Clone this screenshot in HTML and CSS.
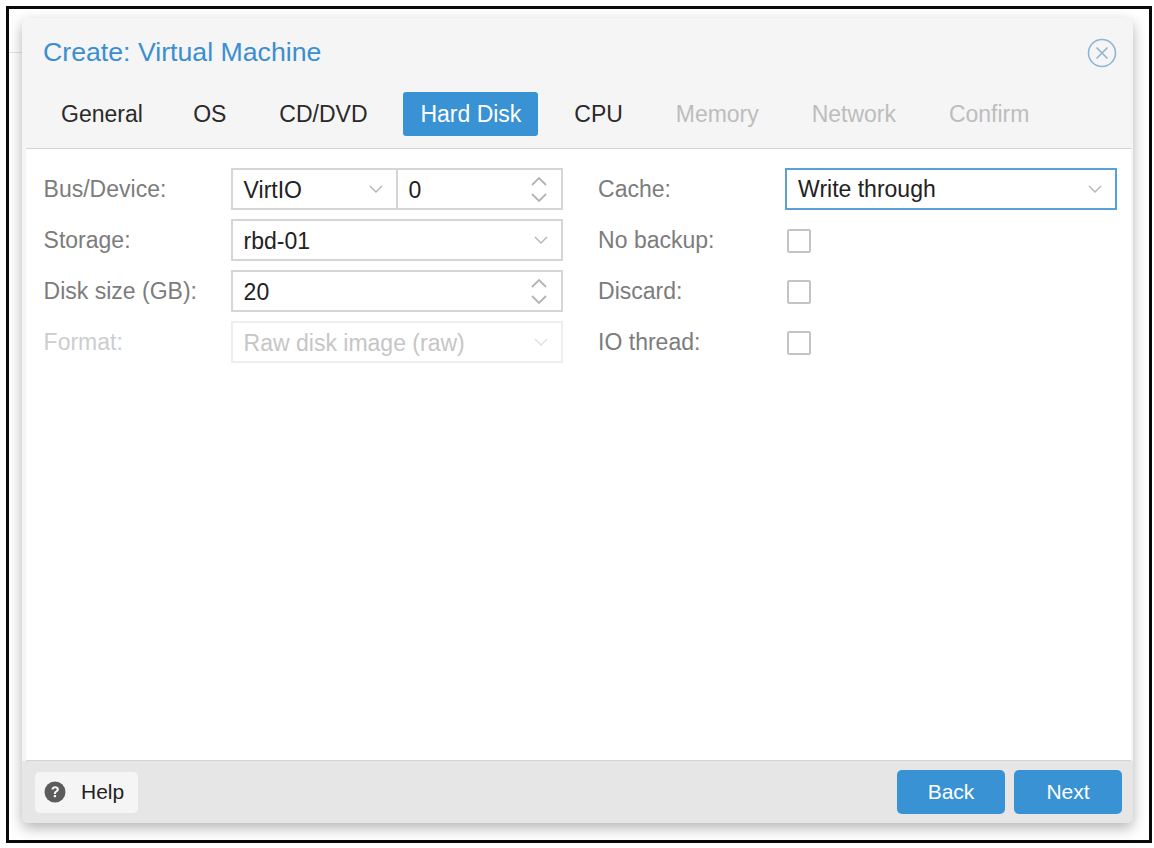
FILE: index.html
```html
<!DOCTYPE html>
<html lang="en">
<head>
    <meta charset="UTF-8">
    <title>Create: Virtual Machine</title>
    <link rel="stylesheet" href="styles.css">
</head>
<body>

<div class="frame">
    <div class="dialog">
        <div class="head">
            <div class="title-row">
                <h1>Create: Virtual Machine</h1>
                <svg class="close" viewBox="0 0 30 30">
                    <circle cx="15" cy="15" r="13.5"/>
                    <path d="M9.5 9.5 20.5 20.5M20.5 9.5 9.5 20.5"/>
                </svg>
            </div>
            <div class="tabs">
                <span class="tab">General</span>
                <span class="tab">OS</span>
                <span class="tab">CD/DVD</span>
                <span class="tab active">Hard Disk</span>
                <span class="tab">CPU</span>
                <span class="tab off">Memory</span>
                <span class="tab off">Network</span>
                <span class="tab off">Confirm</span>
            </div>
        </div>

        <div class="content">
            <div class="col">
                <div class="row">
                    <label>Bus/Device:</label>
                    <div class="pair">
                        <div class="field">
                            <span>VirtIO</span>
                            <svg class="chev" viewBox="0 0 14 8"><path d="M1 1 7 7 13 1"/></svg>
                        </div>
                        <div class="field joined">
                            <span>0</span>
                            <svg class="spin" viewBox="0 0 18 25"><path d="M2 8 9 1 16 8M2 17 9 24 16 17"/></svg>
                        </div>
                    </div>
                </div>
                <div class="row">
                    <label>Storage:</label>
                    <div class="field">
                        <span>rbd-01</span>
                        <svg class="chev" viewBox="0 0 14 8"><path d="M1 1 7 7 13 1"/></svg>
                    </div>
                </div>
                <div class="row">
                    <label>Disk size (GB):</label>
                    <div class="field">
                        <span>20</span>
                        <svg class="spin" viewBox="0 0 18 25"><path d="M2 8 9 1 16 8M2 17 9 24 16 17"/></svg>
                    </div>
                </div>
                <div class="row disabled">
                    <label>Format:</label>
                    <div class="field">
                        <span>Raw disk image (raw)</span>
                        <svg class="chev" viewBox="0 0 14 8"><path d="M1 1 7 7 13 1"/></svg>
                    </div>
                </div>
            </div>

            <div class="col">
                <div class="row">
                    <label>Cache:</label>
                    <div class="field focus">
                        <span>Write through</span>
                        <svg class="chev" viewBox="0 0 14 8"><path d="M1 1 7 7 13 1"/></svg>
                    </div>
                </div>
                <div class="row">
                    <label>No backup:</label>
                    <div class="check"></div>
                </div>
                <div class="row">
                    <label>Discard:</label>
                    <div class="check"></div>
                </div>
                <div class="row">
                    <label>IO thread:</label>
                    <div class="check"></div>
                </div>
            </div>
        </div>

        <div class="foot">
            <button class="help">
                <svg class="help-icon" viewBox="0 0 22 22">
                    <circle cx="11" cy="11" r="10.5"/>
                    <path d="M7.4 8.6C7.6 6.3 9.2 5.2 11.2 5.2 13.3 5.2 14.9 6.5 14.9 8.3 14.9 9.9 13.9 10.6 12.9 11.2 12.2 11.6 12 12 12 12.9H9.8C9.8 11.3 10.3 10.5 11.4 9.9 12.2 9.4 12.6 9.1 12.6 8.4 12.6 7.7 12 7.2 11.1 7.2 10.2 7.2 9.7 7.8 9.6 8.6ZM9.8 14H12.1V16.3H9.8Z"/>
                </svg>
                Help
            </button>
            <div class="nav">
                <button class="primary">Back</button>
                <button class="primary">Next</button>
            </div>
        </div>
    </div>
</div>

</body>
</html>
```

FILE: styles.css
```css
html, body {
    height: 100%;
}
body {
    background-color: #fff;
    font-family: "Liberation Sans", Arial, sans-serif;
    font-size: 23px;
    margin: 0;
    padding: 6px 2px 5px 6px;
    box-sizing: border-box;
    overflow: hidden;
}
.frame {
    position: relative;
    height: 100%;
    box-sizing: border-box;
    border: 3px solid #0a0a0a;
    padding: 9px 16px 17px 13px;
}
/* bit of the page behind the dialog */
.frame::before {
    content: "";
    position: absolute;
    left: 0;
    top: 43px;
    width: 13px;
    height: 1px;
    background-color: #e2e2e2;
}
.dialog {
    position: relative;
    height: 100%;
    display: flex;
    flex-direction: column;
    background-color: #f5f5f5;
    border-radius: 6px;
    box-shadow: 0 5px 14px rgba(0,0,0,0.3);
    overflow: hidden;
}
.head {
    height: 130px;
    padding: 0 16px 0 21px;
    flex-shrink: 0;
}
.title-row {
    display: flex;
    justify-content: space-between;
    align-items: center;
    height: 70px;
}
h1 {
    margin: 0 0 2px;
    font-size: 26.7px;
    font-weight: normal;
    color: #3a8fd0;
}
.close {
    width: 30px;
    height: 30px;
    fill: none;
    stroke: #8db6d6;
    stroke-width: 1.6;
}
.tabs {
    display: flex;
    gap: 18.9px;
    padding-top: 4px;
    padding-left: 1px;
}
.tab {
    height: 44px;
    line-height: 44px;
    padding: 0 17px;
    color: #2a2a2a;
    border-radius: 3px;
}
.tab:nth-child(2) {
    margin-left: -2.5px;
}
.tab.active {
    background-color: #3892d4;
    color: #fff;
}
.tab.off {
    color: #bdbdbd;
}
.content {
    flex: 1;
    display: flex;
    gap: 35.6px;
    margin: 0 2px 0 4px;
    padding: 19px 14px 0 17.6px;
    background-color: #fff;
    border-top: 1px solid #d4d4d4;
    border-bottom: 1px solid #d4d4d4;
}
.col {
    flex: 1;
    display: flex;
    flex-direction: column;
    gap: 9px;
}
.row {
    display: flex;
    align-items: center;
    height: 42px;
}
.row label {
    width: 187px;
    flex-shrink: 0;
    color: #7c7c7c;
}
.pair {
    flex: 1;
    display: flex;
}
.field {
    flex: 1;
    height: 42px;
    box-sizing: border-box;
    display: flex;
    justify-content: space-between;
    align-items: center;
    padding: 0 13px 0 11px;
    border: 2px solid #d6d6d6;
    color: #222;
}
.field span {
    padding-top: 3px;
}
.field.joined {
    border-left-width: 0;
}
.field.focus {
    border-color: #5a9fd8;
}
.field.focus span {
    padding-top: 1px;
}
.chev {
    width: 14px;
    height: 8px;
    fill: none;
    stroke: #b4b4b4;
    stroke-width: 1.4;
}
.spin {
    width: 18px;
    height: 25px;
    fill: none;
    stroke: #b4b4b4;
    stroke-width: 1.8;
}
.disabled label {
    color: #cdcdcd;
}
.disabled .field {
    border-color: #eeeeee;
    color: #c6c6c6;
}
.disabled .chev {
    stroke: #e0e0e0;
}
.check {
    width: 24px;
    height: 24px;
    box-sizing: border-box;
    margin: 2px 0 0 2px;
    border: 2px solid #c4c4c4;
    border-radius: 2px;
}
.foot {
    height: 62px;
    flex-shrink: 0;
    display: flex;
    justify-content: space-between;
    align-items: center;
    padding: 0 11px 0 13px;
    background-color: #e6e6e6;
}
button {
    font-family: inherit;
    font-size: 21px;
    border: none;
    border-radius: 5px;
    cursor: pointer;
}
.help {
    width: 103px;
    height: 41px;
    display: flex;
    align-items: center;
    gap: 15px;
    padding: 0 0 0 9px;
    background-color: #f5f5f5;
    color: #222;
}
.help-icon {
    width: 22px;
    height: 22px;
    flex-shrink: 0;
}
.help-icon circle {
    fill: #5c5c5c;
}
.help-icon path {
    fill: #f5f5f5;
}
.nav {
    display: flex;
    gap: 9px;
}
.primary {
    width: 108px;
    height: 44px;
    background-color: #3892d4;
    color: #fff;
}
```
